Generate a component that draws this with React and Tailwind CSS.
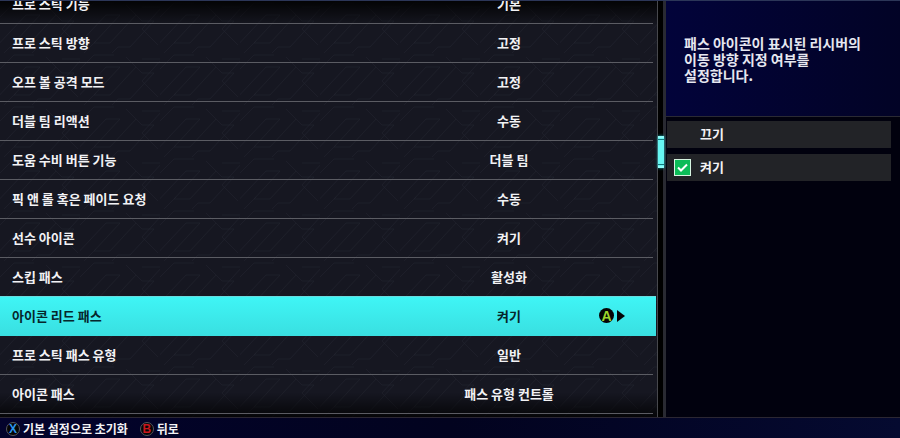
import { useState } from "react";

const settings = [
  { label: "프로 스틱 기능", value: "기본" },
  { label: "프로 스틱 방향", value: "고정" },
  { label: "오프 볼 공격 모드", value: "고정" },
  { label: "더블 팀 리액션", value: "수동" },
  { label: "도움 수비 버튼 기능", value: "더블 팀" },
  { label: "픽 앤 롤 혹은 페이드 요청", value: "수동" },
  { label: "선수 아이콘", value: "켜기" },
  { label: "스킵 패스", value: "활성화" },
  { label: "아이콘 리드 패스", value: "켜기" },
  { label: "프로 스틱 패스 유형", value: "일반" },
  { label: "아이콘 패스", value: "패스 유형 컨트롤" },
];

const PadButton = ({ letter, className }) => (
  <span
    aria-hidden="true"
    className={"box-border rounded-full bg-[#050505] flex items-center justify-center font-['Liberation_Sans',sans-serif] font-bold " + className}
  >
    {letter}
  </span>
);

const ListTexture = () => (
  <svg className="absolute inset-0 w-full h-full" aria-hidden="true">
    <defs>
      <pattern id="texture" width="80" height="52" patternUnits="userSpaceOnUse">
        <path
          d="M-6 48L26 14h14L14 42h16L56 14M4 52L16 40M46 4l16 16h12L50 46H38l-6 6M62 6h20L62 28l16 16M-18 34L14 2h20"
          fill="none"
          stroke="#22232e"
          strokeWidth="1"
          opacity="0.6"
        />
      </pattern>
      <linearGradient id="shade" x1="0" y1="0" x2="0" y2="1">
        <stop offset="0" stopColor="#000" stopOpacity="0.85" />
        <stop offset="0.06" stopColor="#000" stopOpacity="0" />
        <stop offset="0.94" stopColor="#000" stopOpacity="0" />
        <stop offset="1" stopColor="#000" stopOpacity="0.75" />
      </linearGradient>
    </defs>
    <rect width="100%" height="100%" fill="url(#texture)" />
    <rect width="100%" height="100%" fill="url(#shade)" />
  </svg>
);

const SettingRow = ({ label, value, active, onClick }) => (
  <li className="shrink-0">
    <button
      type="button"
      onClick={onClick}
      className={
        active
          ? "w-full h-10 -mt-px pl-3 pb-0.5 grid grid-cols-[1fr_120px_87px] items-center text-left text-[#06262b] bg-linear-to-b from-[#3ff5f5] to-[#39dfe1] border-t border-[#68dcdf]"
          : "w-full h-[38px] pl-3 grid grid-cols-[1fr_120px_87px] items-center text-left text-[#f2f2f5]"
      }
    >
      <span>{label}</span>
      <span className="text-center">{value}</span>
      {active && (
        <span className="flex items-center gap-[3px] pl-[30px]">
          <PadButton letter="A" className="w-[15px] h-[15px] text-[14px] text-[#9bd52c]" />
          <svg width="8" height="12" viewBox="0 0 8 12" aria-hidden="true">
            <path d="M0 0L8 6L0 12Z" fill="#050505" />
          </svg>
        </span>
      )}
    </button>
    {!active && <div className="h-px mr-[3px] bg-[#5b5c63]" />}
  </li>
);

const Option = ({ label, checked, onChange }) => (
  <label className="relative h-[27px] pl-[7px] flex items-center gap-[9px] bg-[#222327] text-[13px] leading-4 font-bold cursor-pointer">
    <input type="radio" name="option" className="peer sr-only" checked={checked} onChange={onChange} />
    <svg width="17" height="17" viewBox="0 0 17 17" className="invisible peer-checked:visible" aria-hidden="true">
      <rect x="0.5" y="0.5" width="16" height="16" fill="#0cbc58" stroke="#d7f5e2" />
      <path d="M4 8.5L7 11.5L13 5.5" fill="none" stroke="#fff" strokeWidth="2" />
    </svg>
    <span className="pb-0.5">{label}</span>
  </label>
);

const App = () => {
  const [selected, setSelected] = useState(8);
  const [option, setOption] = useState("켜기");

  return (
    <div className="h-screen flex flex-col bg-[#01010e] text-[#f2f2f5] font-['Noto_Sans_CJK_KR',sans-serif] overflow-hidden">
      <main className="flex-1 min-h-0 flex border-t border-[#2c3658]">
        <section className="relative w-[73%] bg-[#161721] pr-px pb-[3px] flex flex-col justify-end overflow-hidden">
          <ListTexture />
          <ul className="relative text-[13px] font-bold leading-5">
            {settings.map((item, i) => (
              <SettingRow
                key={item.label}
                label={item.label}
                value={item.value}
                active={i === selected}
                onClick={() => setSelected(i)}
              />
            ))}
          </ul>
        </section>

        <div className="relative w-[9px] shrink-0 bg-black border-l border-l-[#47484d] border-r-3 border-r-[#292a32]">
          <div className="absolute top-[32.5%] left-0 -right-px h-8 bg-[#66f5f2] border-y-2 border-[#8ffcfa] shadow-[0_0_3px_#20bfc4] py-px">
            <div className="h-full border-y border-[#12767c]" />
          </div>
        </div>

        <aside className="flex-1 min-w-0">
          <div className="h-[116px] pl-[18px] flex items-center bg-linear-to-r from-[#02033a] to-[#020326] border-b border-[#2a2a33]">
            <p className="text-[14px] leading-4 font-bold text-[#e6e7f0]">
              패스 아이콘이 표시된 리시버의
              <br />
              이동 방향 지정 여부를
              <br />
              설정합니다.
            </p>
          </div>
          <div className="pt-1 pl-px pr-[9px] flex flex-col gap-[6px]">
            {["끄기", "켜기"].map((name) => (
              <Option key={name} label={name} checked={option === name} onChange={() => setOption(name)} />
            ))}
          </div>
        </aside>
      </main>

      <footer className="h-[21px] pl-[6px] pt-0.5 flex items-center gap-3 border-t border-[#2b2733] bg-linear-to-r from-[#03032c] via-[#02031f] to-[#050a30] text-[12px] leading-4 font-bold">
        <button type="button" className="flex items-center gap-[3px]">
          <PadButton letter="X" className="w-[14px] h-[14px] text-[12px] text-[#2b95ee] border border-[#55565c]" />
          기본 설정으로 초기화
        </button>
        <button type="button" className="flex items-center gap-[3px]">
          <PadButton letter="B" className="w-[14px] h-[14px] text-[12px] text-[#c9161d] border border-[#55565c]" />
          뒤로
        </button>
      </footer>
    </div>
  );
};

export default App;
